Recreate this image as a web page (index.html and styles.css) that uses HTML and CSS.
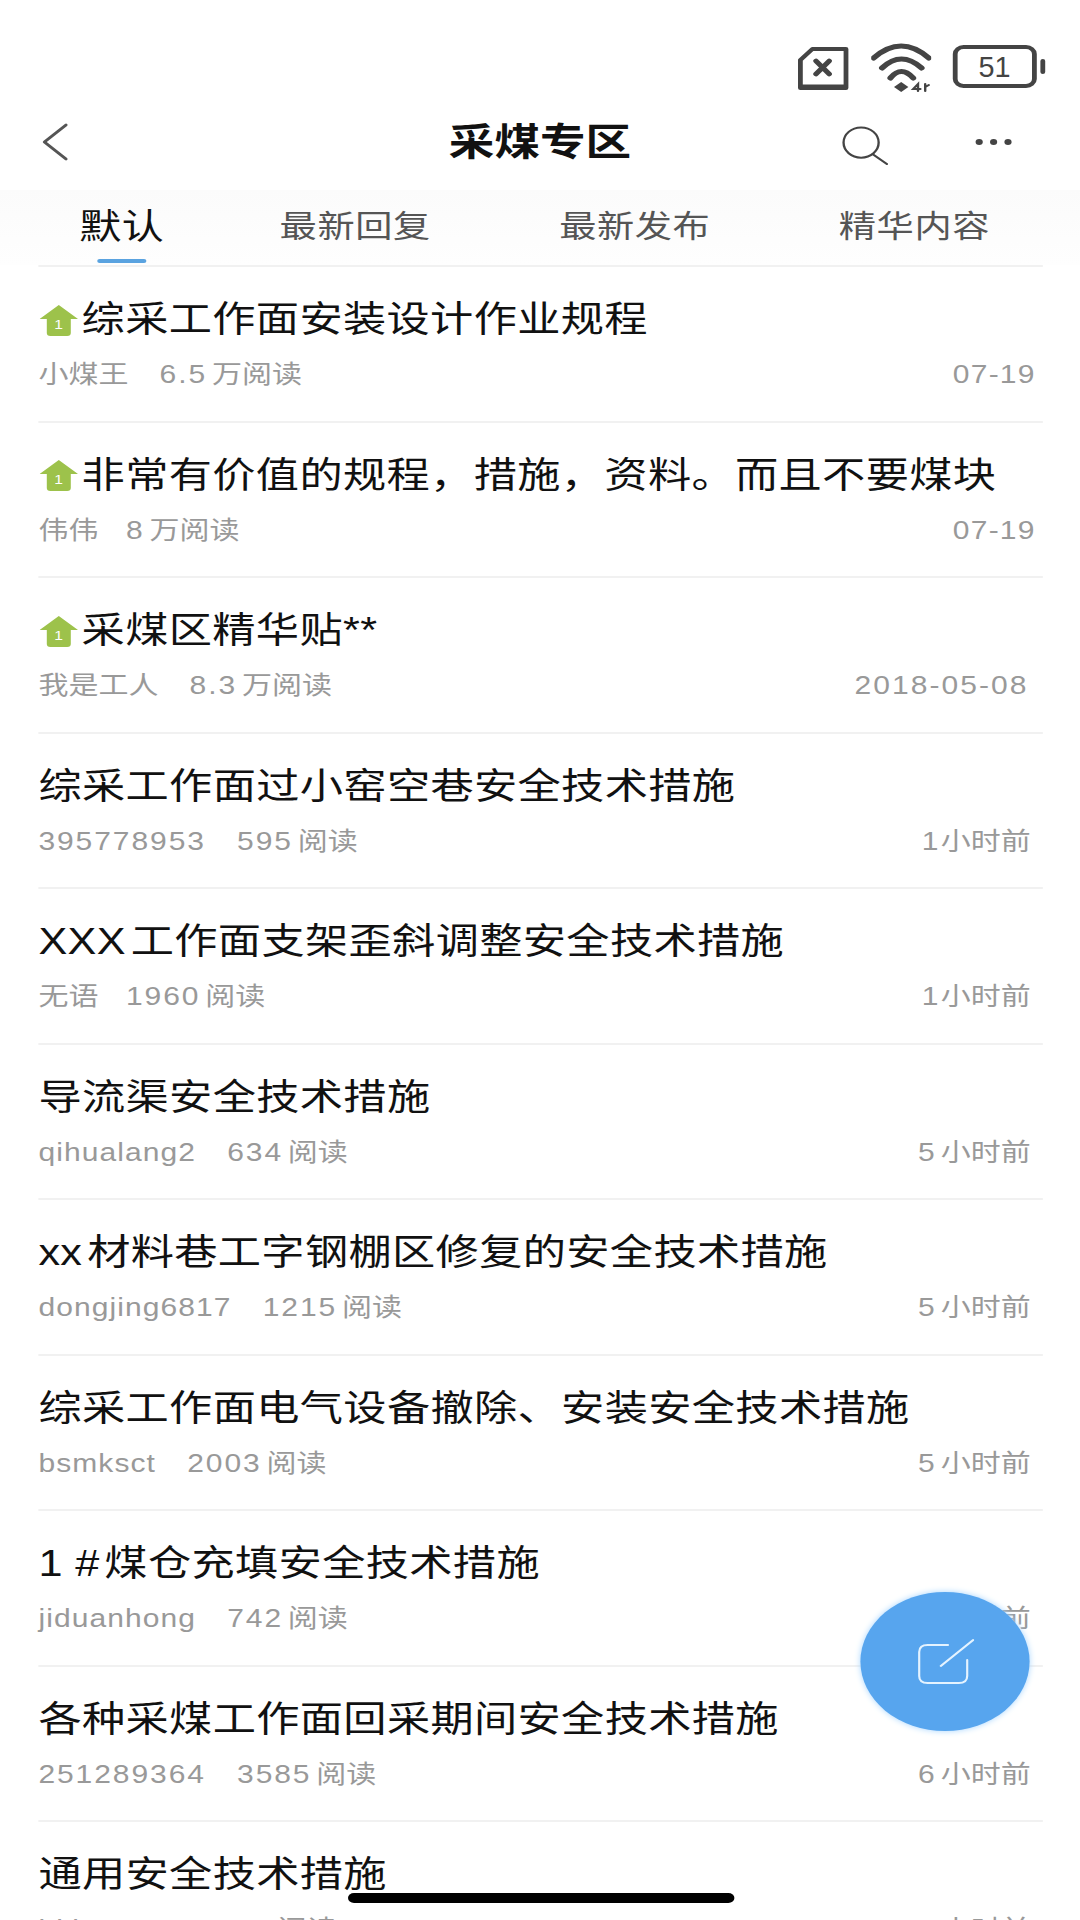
FILE: index.html
```html
<!DOCTYPE html>
<html>
  <head>
    <title>采煤专区</title>
    <link rel="stylesheet" href="styles.css">
  </head>
  <body>
    <div class="screen">
      <div class="status-bar">
        <svg class="sim" viewBox="0 0 44 45" fill="none" stroke="#444" stroke-width="4" stroke-linejoin="round" stroke-linecap="round">
          <path d="M13 3H41V42H3V14Z"/>
          <path d="M16 15L27 28M27 15L16 28" stroke-width="4.5"/>
          <path d="M4 41H40" stroke-width="5"/>
        </svg>
        <svg class="wifi" viewBox="0 0 50 49" fill="none" stroke="#444" stroke-linecap="round">
          <path d="M2 15Q25 -9 48 15" stroke-width="5"/>
          <path d="M9 25Q25 7 42 25" stroke-width="5"/>
          <path d="M16 35Q25 22 35 35" stroke-width="5"/>
          <path d="M19 44L25 39L31 44L25 49Z" fill="#444" stroke="none"/>
          <path d="M39 48V41L35 46H41M45 41V48M45 44L48 42" stroke-width="2"/>
        </svg>
        <div class="battery">
          <div class="battery-body"><span class="battery-num">51</span></div>
          <div class="battery-nub"></div>
        </div>
      </div>

      <div class="nav">
        <svg class="back" viewBox="0 0 22 38" fill="none" stroke="#555" stroke-width="2.6" stroke-linecap="round" stroke-linejoin="round">
          <path d="M20 2L2 19L20 36"/>
        </svg>
        <h1 class="nav-title">采煤专区</h1>
        <svg class="search" viewBox="0 0 41 40" fill="none" stroke="#444" stroke-width="2" stroke-linecap="round">
          <ellipse cx="17" cy="17" rx="15" ry="15.5"/>
          <path d="M27 29L39 39"/>
        </svg>
        <div class="dots"><i></i><i></i><i></i></div>
      </div>

      <div class="tabs">
        <div class="tab active">默认</div>
        <div class="tab">最新回复</div>
        <div class="tab">最新发布</div>
        <div class="tab">精华内容</div>
      </div>

      <div class="list">
        <div class="item">
          <div class="item-title">
            <svg class="pin" viewBox="0 0 32 31"><path d="M16 0L32 14H26V28Q26 31 23 31H9Q6 31 6 28V14H0Z" fill="#9dc24b"/><text x="16" y="24" text-anchor="middle" class="pin-num">1</text></svg>
            综采工作面安装设计作业规程
          </div>
          <div class="item-meta"><span class="author">小煤王</span><span class="reads"><span class="num">6.5</span>万阅读</span><span class="time date">07-19</span></div>
        </div>
        <div class="item">
          <div class="item-title">
            <svg class="pin" viewBox="0 0 32 31"><path d="M16 0L32 14H26V28Q26 31 23 31H9Q6 31 6 28V14H0Z" fill="#9dc24b"/><text x="16" y="24" text-anchor="middle" class="pin-num">1</text></svg>
            非常有价值的规程，措施，资料。而且不要煤块
          </div>
          <div class="item-meta"><span class="author short">伟伟</span><span class="reads"><span class="num">8</span>万阅读</span><span class="time date">07-19</span></div>
        </div>
        <div class="item">
          <div class="item-title">
            <svg class="pin" viewBox="0 0 32 31"><path d="M16 0L32 14H26V28Q26 31 23 31H9Q6 31 6 28V14H0Z" fill="#9dc24b"/><text x="16" y="24" text-anchor="middle" class="pin-num">1</text></svg>
            采煤区精华贴**
          </div>
          <div class="item-meta"><span class="author">我是工人</span><span class="reads"><span class="num">8.3</span>万阅读</span><span class="time full-date">2018-05-08</span></div>
        </div>
        <div class="item">
          <div class="item-title">综采工作面过小窑空巷安全技术措施</div>
          <div class="item-meta"><span class="author num">395778953</span><span class="reads"><span class="num">595</span>阅读</span><span class="time"><span class="hour">1</span>小时前</span></div>
        </div>
        <div class="item">
          <div class="item-title"><span class="lat">XXX</span>工作面支架歪斜调整安全技术措施</div>
          <div class="item-meta"><span class="author short">无语</span><span class="reads"><span class="num">1960</span>阅读</span><span class="time"><span class="hour">1</span>小时前</span></div>
        </div>
        <div class="item">
          <div class="item-title">导流渠安全技术措施</div>
          <div class="item-meta"><span class="author name">qihualang2</span><span class="reads"><span class="num">634</span>阅读</span><span class="time"><span class="hour wide">5</span>小时前</span></div>
        </div>
        <div class="item">
          <div class="item-title"><span class="lat">xx</span>材料巷工字钢棚区修复的安全技术措施</div>
          <div class="item-meta"><span class="author name">dongjing6817</span><span class="reads"><span class="num">1215</span>阅读</span><span class="time"><span class="hour wide">5</span>小时前</span></div>
        </div>
        <div class="item">
          <div class="item-title">综采工作面电气设备撤除、安装安全技术措施</div>
          <div class="item-meta"><span class="author name">bsmksct</span><span class="reads"><span class="num">2003</span>阅读</span><span class="time"><span class="hour wide">5</span>小时前</span></div>
        </div>
        <div class="item">
          <div class="item-title"><span class="lat">1 #</span>煤仓充填安全技术措施</div>
          <div class="item-meta"><span class="author name">jiduanhong</span><span class="reads"><span class="num">742</span>阅读</span><span class="time"><span class="hour wide">5</span>小时前</span></div>
        </div>
        <div class="item">
          <div class="item-title">各种采煤工作面回采期间安全技术措施</div>
          <div class="item-meta"><span class="author num">251289364</span><span class="reads"><span class="num">3585</span>阅读</span><span class="time"><span class="hour wide">6</span>小时前</span></div>
        </div>
        <div class="item">
          <div class="item-title">通用安全技术措施</div>
          <div class="item-meta"><span class="author name">bkkxxxxxx</span><span class="reads"><span class="num">123</span>阅读</span><span class="time"><span class="hour wide">6</span>小时前</span></div>
        </div>
      </div>

      <div class="fab">
        <svg class="fab-icon" viewBox="0 0 48 46" fill="none" stroke="#e4f3ff" stroke-width="1.8" stroke-linecap="round">
          <path d="M26 6H9Q2 6 2 13V37Q2 44 9 44H35Q42 44 42 37V21"/>
          <path d="M20 27L47 1" stroke-width="1.8"/>
        </svg>
      </div>
      <div class="home-bar"></div>
    </div>
  </body>
</html>
```

FILE: styles.css
```css
* {
  box-sizing: border-box;
}

html, body {
  margin: 0;
  height: 1920px;
  overflow: hidden;
  background: #fff;
}

/* the screenshot is stretched sideways, so lay out at 900 wide and stretch */
.screen {
  position: relative;
  width: 900px;
  height: 1920px;
  overflow: hidden;
  transform: scaleX(1.2);
  transform-origin: 0 0;
  font-family: "Liberation Sans", "Noto Sans CJK SC", sans-serif;
  color: #111;
}

.status-bar {
  display: flex;
  justify-content: flex-end;
  align-items: flex-start;
  gap: 18px;
  height: 100px;
  padding: 43px 29px 0 0;
}

.sim {
  width: 44px;
  height: 45px;
  margin-top: 3px;
}

.wifi {
  width: 50px;
  height: 49px;
}

.battery {
  display: flex;
  align-items: center;
  gap: 3px;
  margin-top: 2px;
}

.battery-body {
  display: flex;
  align-items: center;
  justify-content: center;
  width: 70px;
  height: 43px;
  border: 4px solid #444;
  border-radius: 9px;
}

.battery-num {
  display: inline-block;
  font-size: 30px;
  line-height: 1;
  color: #444;
  transform: scaleX(0.8);
}

.battery-nub {
  width: 4px;
  height: 15px;
  border-radius: 2px;
  background: #444;
}

.nav {
  display: flex;
  align-items: center;
  height: 90px;
  padding: 0 0 6px 35px;
}

.back {
  width: 22px;
  height: 38px;
}

.nav-title {
  margin: 0 0 0 317px;
  font-size: 38px;
  font-weight: bold;
  line-height: 50px;
}

.search {
  width: 40px;
  height: 39px;
  margin: 6px 0 0 175px;
}

.dots {
  display: flex;
  gap: 6px;
  margin-left: 72px;
}

.dots i {
  width: 6px;
  height: 6px;
  border-radius: 50%;
  background: #444;
}

.tabs {
  display: flex;
  gap: 107px;
  height: 75px;
  padding: 13px 0 0 66px;
  background: linear-gradient(#fbfbfb, #fefefe);
}

.tab {
  position: relative;
  font-size: 31px;
  line-height: 48px;
  color: #555;
  letter-spacing: 0.5px;
}

.tab.active {
  margin-right: -11px;
  font-size: 35px;
  color: #111;
}

.tab.active::after {
  content: "";
  position: absolute;
  left: 15px;
  right: 15px;
  bottom: 2px;
  height: 4px;
  border-radius: 2px;
  background: #5aa3e0;
}

.list {
  padding: 0 31px 0 32px;
}

.item {
  height: 155.5px;
  padding-top: 27px;
  border-top: 2px solid #f1f1f1;
}

.item-title {
  display: flex;
  align-items: center;
  font-size: 36px;
  line-height: 52px;
  letter-spacing: 0.3px;
  white-space: nowrap;
}

.lat {
  margin-right: 4px;
  white-space: pre;
}

.pin {
  flex: none;
  width: 32px;
  height: 31px;
  margin: 0 3px 0 1px;
}

.pin-num {
  font-size: 13px;
  font-family: "Liberation Sans", sans-serif;
  fill: #fff;
}

.item-meta {
  display: flex;
  margin-top: 11px;
  font-size: 25px;
  line-height: 34px;
  color: #999;
}

.num {
  letter-spacing: 1.6px;
  margin-right: 4px;
}

.author.num {
  margin-right: 0;
}

.author.short {
  margin-right: -3px;
}

.name {
  letter-spacing: 0.9px;
}

.reads {
  margin-left: 26px;
}

.time {
  margin-left: auto;
  padding-right: 10px;
}

.hour {
  margin-right: 2px;
}

.hour.wide {
  margin-right: 5px;
}

.time.date {
  padding-right: 6px;
  letter-spacing: 1px;
}

.time.full-date {
  padding-right: 12px;
  letter-spacing: 1.7px;
}

.fab {
  position: absolute;
  left: 717px;
  top: 1592px;
  display: flex;
  align-items: center;
  justify-content: center;
  width: 141px;
  height: 139px;
  border-radius: 50%;
  background: #57a5ee;
  box-shadow: 0 0 6px #a8d6ff;
}

.fab-icon {
  width: 48px;
  height: 46px;
}

.home-bar {
  position: absolute;
  left: 290px;
  top: 1893px;
  width: 322px;
  height: 10px;
  border-radius: 5px;
  background: #000;
}
```
